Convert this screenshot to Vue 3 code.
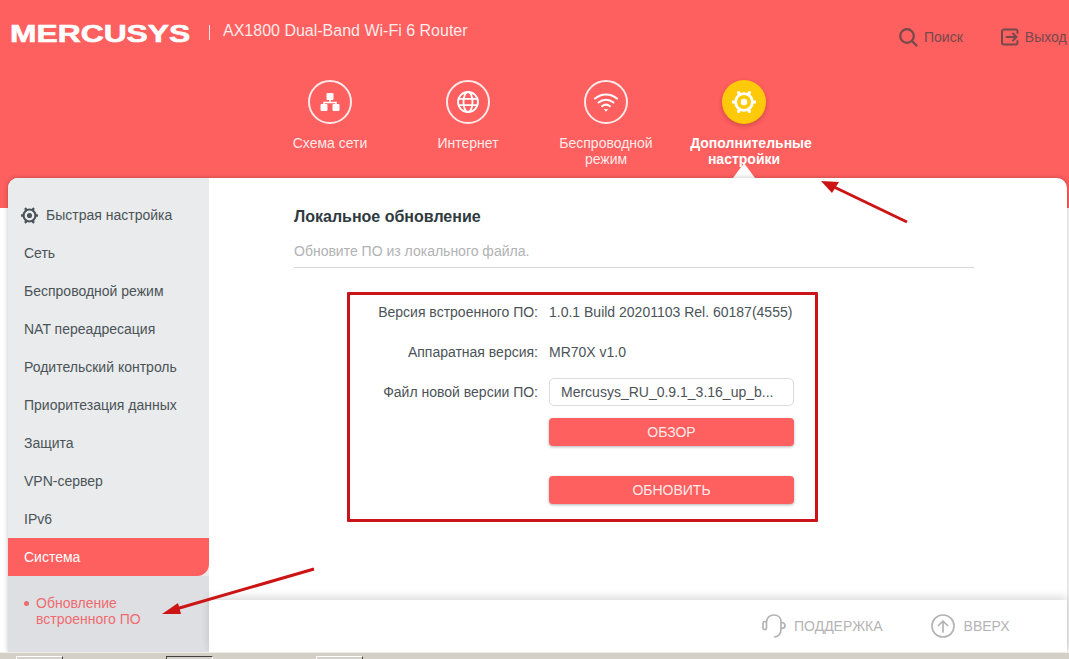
<script setup>
const navItems = [
  { id: 'map', label: 'Схема сети' },
  { id: 'net', label: 'Интернет' },
  { id: 'wifi', label: 'Беспроводной режим' },
  { id: 'adv', label: 'Дополнительные настройки', active: true },
];

const menu = [
  'Сеть',
  'Беспроводной режим',
  'NAT переадресация',
  'Родительский контроль',
  'Приоритезация данных',
  'Защита',
  'VPN-сервер',
  'IPv6',
];

// six short spokes that give the ring its hexagon corners
const gearNubs =
  'M21 12h1.800M16.500 19.800l.9 1.600M7.500 19.800l-.9 1.600M3 12H1.200M7.500 4.200l-.9-1.600M16.500 4.200l.9-1.600';
</script>

<template>
  <div class="page">
    <header class="top">
      <div class="top-row">
        <div class="brand"><span class="logo">MERCUSYS</span></div>
        <span class="sep"></span>
        <span class="model">AX1800 Dual-Band Wi-Fi 6 Router</span>
        <div class="top-actions">
          <span class="action search">
            <svg width="20" height="20" viewBox="0 0 20 20" fill="none" stroke="currentColor" stroke-width="2.2">
              <circle cx="9" cy="9" r="6.800" />
              <path d="M14 14l4.500 4.500" stroke-linecap="round" />
            </svg>
            Поиск
          </span>
          <span class="action logout">
            <svg width="18" height="18" viewBox="0 0 18 18" fill="none" stroke="currentColor" stroke-width="2" stroke-linecap="round" stroke-linejoin="round">
              <path d="M16.500 5V3.500a2 2 0 0 0-2-2H3a2 2 0 0 0-2 2v11a2 2 0 0 0 2 2h11.500a2 2 0 0 0 2-2V13" />
              <path d="M5.500 9h10M12 5.500 15.500 9 12 12.500" />
            </svg>
            Выход
          </span>
        </div>
      </div>

      <nav class="nav">
        <div v-for="item in navItems" :key="item.id" class="nav-item" :class="{ active: item.active }">
          <span class="nav-circle">
            <svg v-if="item.id === 'map'" width="24" height="24" viewBox="0 0 24 24">
              <g fill="#fff">
                <rect x="8.500" y="3" width="7" height="7" rx="1" />
                <rect x="2.500" y="14" width="7" height="7" rx="1" />
                <rect x="14.500" y="14" width="7" height="7" rx="1" />
              </g>
              <path d="M12 9v3.500M6 15v-2.500h12V15" fill="none" stroke="#fff" stroke-width="1.600" />
            </svg>
            <svg v-else-if="item.id === 'net'" width="26" height="26" viewBox="0 0 26 26" fill="none" stroke="#fff" stroke-width="1.800">
              <circle cx="13" cy="13" r="10" />
              <ellipse cx="13" cy="13" rx="4.500" ry="10" />
              <path d="M3.500 9.800h19M3.500 16.200h19" />
            </svg>
            <svg v-else-if="item.id === 'wifi'" width="28" height="24" viewBox="0 0 28 24" fill="none" stroke="#fff" stroke-width="2" stroke-linecap="round">
              <path d="M3 8.500C9.500 3 18.500 3 25 8.500" />
              <path d="M6.500 12.500C11 8.800 17 8.800 21.500 12.500" />
              <path d="M10 16.200c2.500-2 5.500-2 8 0" />
              <path d="M11.800 19.300h4.400L14 21.800z" fill="#fff" stroke="none" />
            </svg>
            <svg v-else width="24" height="24" viewBox="0 0 24 24" fill="none" stroke="#fff">
              <circle cx="12" cy="12" r="8.400" stroke-width="2.800" />
              <path :d="gearNubs" stroke-width="3.200" stroke-linecap="round" />
              <circle cx="12" cy="12" r="3.300" fill="#fff" stroke="none" />
            </svg>
          </span>
          <span class="nav-label">{{ item.label }}</span>
          <span v-if="item.active" class="notch"></span>
        </div>
      </nav>
    </header>

    <div class="card">
      <aside class="side">
        <div class="side-list">
          <div class="side-item quick">
            <svg width="17" height="17" viewBox="0 0 24 24" fill="none" stroke="#4b5357">
              <circle cx="12" cy="12" r="8.400" stroke-width="3" />
              <path :d="gearNubs" stroke-width="3.400" stroke-linecap="round" />
              <circle cx="12" cy="12" r="3.600" fill="#4b5357" stroke="none" />
            </svg>
            Быстрая настройка
          </div>
          <div v-for="name in menu" :key="name" class="side-item">{{ name }}</div>
          <div class="side-item current">Система</div>
        </div>
        <div class="side-sub">
          <span class="dot"></span>
          <span>Обновление<br />встроенного ПО</span>
        </div>
      </aside>

      <main class="main">
        <section class="content">
          <h2 class="title">Локальное обновление</h2>
          <p class="hint">Обновите ПО из локального файла.</p>

          <div class="form">
            <div class="row">
              <span class="lbl">Версия встроенного ПО:</span>
              <span class="val">1.0.1 Build 20201103 Rel. 60187(4555)</span>
            </div>
            <div class="row">
              <span class="lbl">Аппаратная версия:</span>
              <span class="val">MR70X v1.0</span>
            </div>
            <div class="row">
              <span class="lbl">Файл новой версии ПО:</span>
              <span class="file">Mercusys_RU_0.9.1_3.16_up_b...</span>
            </div>
            <button class="btn">ОБЗОР</button>
            <button class="btn second">ОБНОВИТЬ</button>
          </div>
        </section>

        <footer class="foot">
          <span class="foot-link support">
            <svg width="24" height="24" viewBox="0 0 24 24" fill="none" stroke="#b4b4b4" stroke-width="1.700" stroke-linecap="round">
              <rect x="1" y="7.500" width="3.500" height="8" rx="1.700" />
              <path d="M4.500 8C5 3.500 8 1 12 1s7 2.500 7 7v7c0 4.500-2.500 7.500-6.500 8" />
              <path d="M19.500 8.500c2 0 3.500 1 3.500 3s-1.500 3-3.500 3" />
            </svg>
            ПОДДЕРЖКА
          </span>
          <span class="foot-link">
            <svg width="24" height="24" viewBox="0 0 24 24" fill="none" stroke="#b4b4b4" stroke-width="1.700" stroke-linecap="round" stroke-linejoin="round">
              <circle cx="12" cy="12" r="11" />
              <path d="M12 18V7M7.500 11.500 12 7l4.500 4.500" />
            </svg>
            ВВЕРХ
          </span>
        </footer>
      </main>
    </div>

    <div class="taskbar">
      <span class="tab"></span>
      <span class="tab pressed"></span>
      <span class="tab"></span>
    </div>

    <!-- red annotation arrows drawn over the screenshot -->
    <svg class="marks" width="1069" height="659" viewBox="0 0 1069 659">
      <path d="M907 222 832 186" stroke="#cc1414" stroke-width="3" fill="none" />
      <path d="M821 181 839 182 832 193z" fill="#cc1414" />
      <path d="M314 569 176 609" stroke="#cc1414" stroke-width="3" fill="none" />
      <path d="M162 614 178 603 181 614z" fill="#cc1414" />
    </svg>
  </div>
</template>

<style>
html,
body {
  margin: 0;
  background: #fff;
  overflow: hidden;
}
</style>

<style scoped>
.page {
  position: relative;
  width: 1069px;
  height: 659px;
  display: flex;
  flex-direction: column;
  overflow: hidden;
  background: #fff;
  font-family: 'Liberation Sans', Arial, sans-serif;
  font-size: 14px;
  color: #4b5357;
}

.top {
  position: relative;
  height: 208px;
  flex: none;
  background: #fe5f5f;
}

.top-row {
  display: flex;
  align-items: center;
  height: 64px;
  padding-left: 10px;
}

.brand {
  width: 199px;
  height: 26px;
  margin-top: 3px;
  overflow: visible;
}

.logo {
  display: inline-block;
  font-size: 24px;
  line-height: 26px;
  font-weight: 700;
  color: #fff;
  -webkit-text-stroke: 0.6px #fff;
  transform: scaleX(1.325);
  transform-origin: left center;
}

.sep {
  width: 1px;
  height: 15px;
  background: #ffe6e6;
}

.model {
  margin-left: 13px;
  margin-top: -2px;
  font-size: 16px;
  color: #ffeaea;
}

.top-actions {
  position: absolute;
  top: 27px;
  left: 898px;
  display: flex;
  gap: 38px;
  white-space: nowrap;
  color: #754a4c;
}

.action {
  display: flex;
  align-items: center;
  gap: 6px;
  height: 20px;
}

.nav {
  display: flex;
  padding-left: 261px;
  padding-top: 16px;
}

.nav-item {
  position: relative;
  width: 138px;
  display: flex;
  flex-direction: column;
  align-items: center;
  color: #ffe9e9;
  text-align: center;
  line-height: 16px;
}

.nav-circle {
  width: 44px;
  height: 44px;
  box-sizing: border-box;
  border: 2px solid #ffe9e9;
  border-radius: 50%;
  display: flex;
  align-items: center;
  justify-content: center;
  margin-bottom: 11px;
}

.nav-label {
  width: 110px;
}

.nav-item.active {
  color: #fff;
  font-weight: 700;
}

.nav-item.active .nav-label {
  width: 138px;
  text-indent: 14px;
}

.nav-item.active .nav-circle {
  border: none;
  background: #fec908;
  box-shadow: 0 2px 4px rgba(120, 40, 30, 0.35);
}

.notch {
  position: absolute;
  left: 58px;
  top: 83px;
  width: 0;
  height: 0;
  border-left: 11px solid transparent;
  border-right: 11px solid transparent;
  border-bottom: 15px solid #fff;
}

.card {
  position: relative;
  flex: 1;
  display: flex;
  min-height: 0;
  margin: -30px 2px 0 8px;
  background: #fff;
  border-radius: 10px 10px 0 0;
  box-shadow: 0 0 5px rgba(0, 0, 0, 0.25);
}

.side {
  width: 201px;
  flex: none;
  display: flex;
  flex-direction: column;
  background: #dedfe2;
  border-radius: 10px 0 0 0;
  overflow: hidden;
}

.side-list {
  padding-top: 18px;
  background: #e9ebed;
}

.side-item {
  display: flex;
  align-items: center;
  height: 38px;
  padding-left: 16px;
}

.quick {
  gap: 8px;
  padding-left: 13px;
}

.current {
  color: #fff;
  background: #fe5f5f;
  border-bottom-right-radius: 12px;
}

.side-sub {
  display: flex;
  padding: 19px 0 0 16px;
  line-height: 16px;
  color: #ee6b70;
}

.dot {
  width: 5px;
  height: 5px;
  margin: 6px 7px 0 0;
  border-radius: 50%;
  background: #ee6b70;
}

.main {
  flex: 1;
  min-width: 0;
  display: flex;
  flex-direction: column;
}

.content {
  flex: 1;
  padding: 29px 0 0 85px;
}

.title {
  margin: 0;
  font-size: 16px;
  line-height: 20px;
  font-weight: 700;
  color: #2f3a40;
}

.hint {
  width: 680px;
  height: 27px;
  box-sizing: border-box;
  margin: 14px 0 0;
  line-height: 20px;
  color: #b0b2b4;
  border-bottom: 1px solid #d8d8d8;
}

.form {
  width: 471px;
  height: 230px;
  box-sizing: border-box;
  margin: 24px 0 0 53px;
  padding-top: 3px;
  border: 3px solid #c8141a;
  border-radius: 1px;
  display: flex;
  flex-direction: column;
}

.row {
  display: flex;
  align-items: center;
  height: 28px;
  margin-bottom: 12px;
}

.lbl {
  width: 188px;
  margin-right: 11px;
  text-align: right;
  white-space: nowrap;
}

.file {
  width: 245px;
  height: 28px;
  box-sizing: border-box;
  padding-left: 11px;
  line-height: 26px;
  border: 1px solid #dcdcdc;
  border-radius: 5px;
}

.btn {
  display: block;
  width: 245px;
  height: 28px;
  flex: none;
  margin-left: 199px;
  padding: 0;
  border: none;
  border-radius: 4px;
  background: #fe5f5f;
  color: #ffeaea;
  font: inherit;
  box-shadow: 0 1px 3px rgba(0, 0, 0, 0.3);
}

.btn.second {
  margin-top: 30px;
}

.foot {
  height: 52px;
  flex: none;
  display: flex;
  align-items: center;
  padding-left: 553px;
  gap: 48px;
  background: #fff;
  box-shadow: 0 -3px 8px rgba(0, 0, 0, 0.14);
  color: #b4b4b4;
}

.foot-link {
  display: flex;
  align-items: center;
  gap: 9px;
}

.support {
  gap: 8px;
}

.taskbar {
  height: 7px;
  flex: none;
  position: relative;
  display: flex;
  gap: 103px;
  box-sizing: border-box;
  padding: 3px 0 0 16px;
  background: #d4d0c8;
  border-top: 1px solid #efede8;
}

.tab {
  width: 47px;
  height: 3px;
  box-sizing: border-box;
  border-top: 1px solid #fff;
  border-left: 1px solid #fff;
  border-right: 1px solid #404040;
}

.tab.pressed {
  border-top-color: #404040;
  border-left-color: #404040;
  border-right-color: #fff;
}

.marks {
  position: absolute;
  left: 0;
  top: 0;
  pointer-events: none;
}
</style>
